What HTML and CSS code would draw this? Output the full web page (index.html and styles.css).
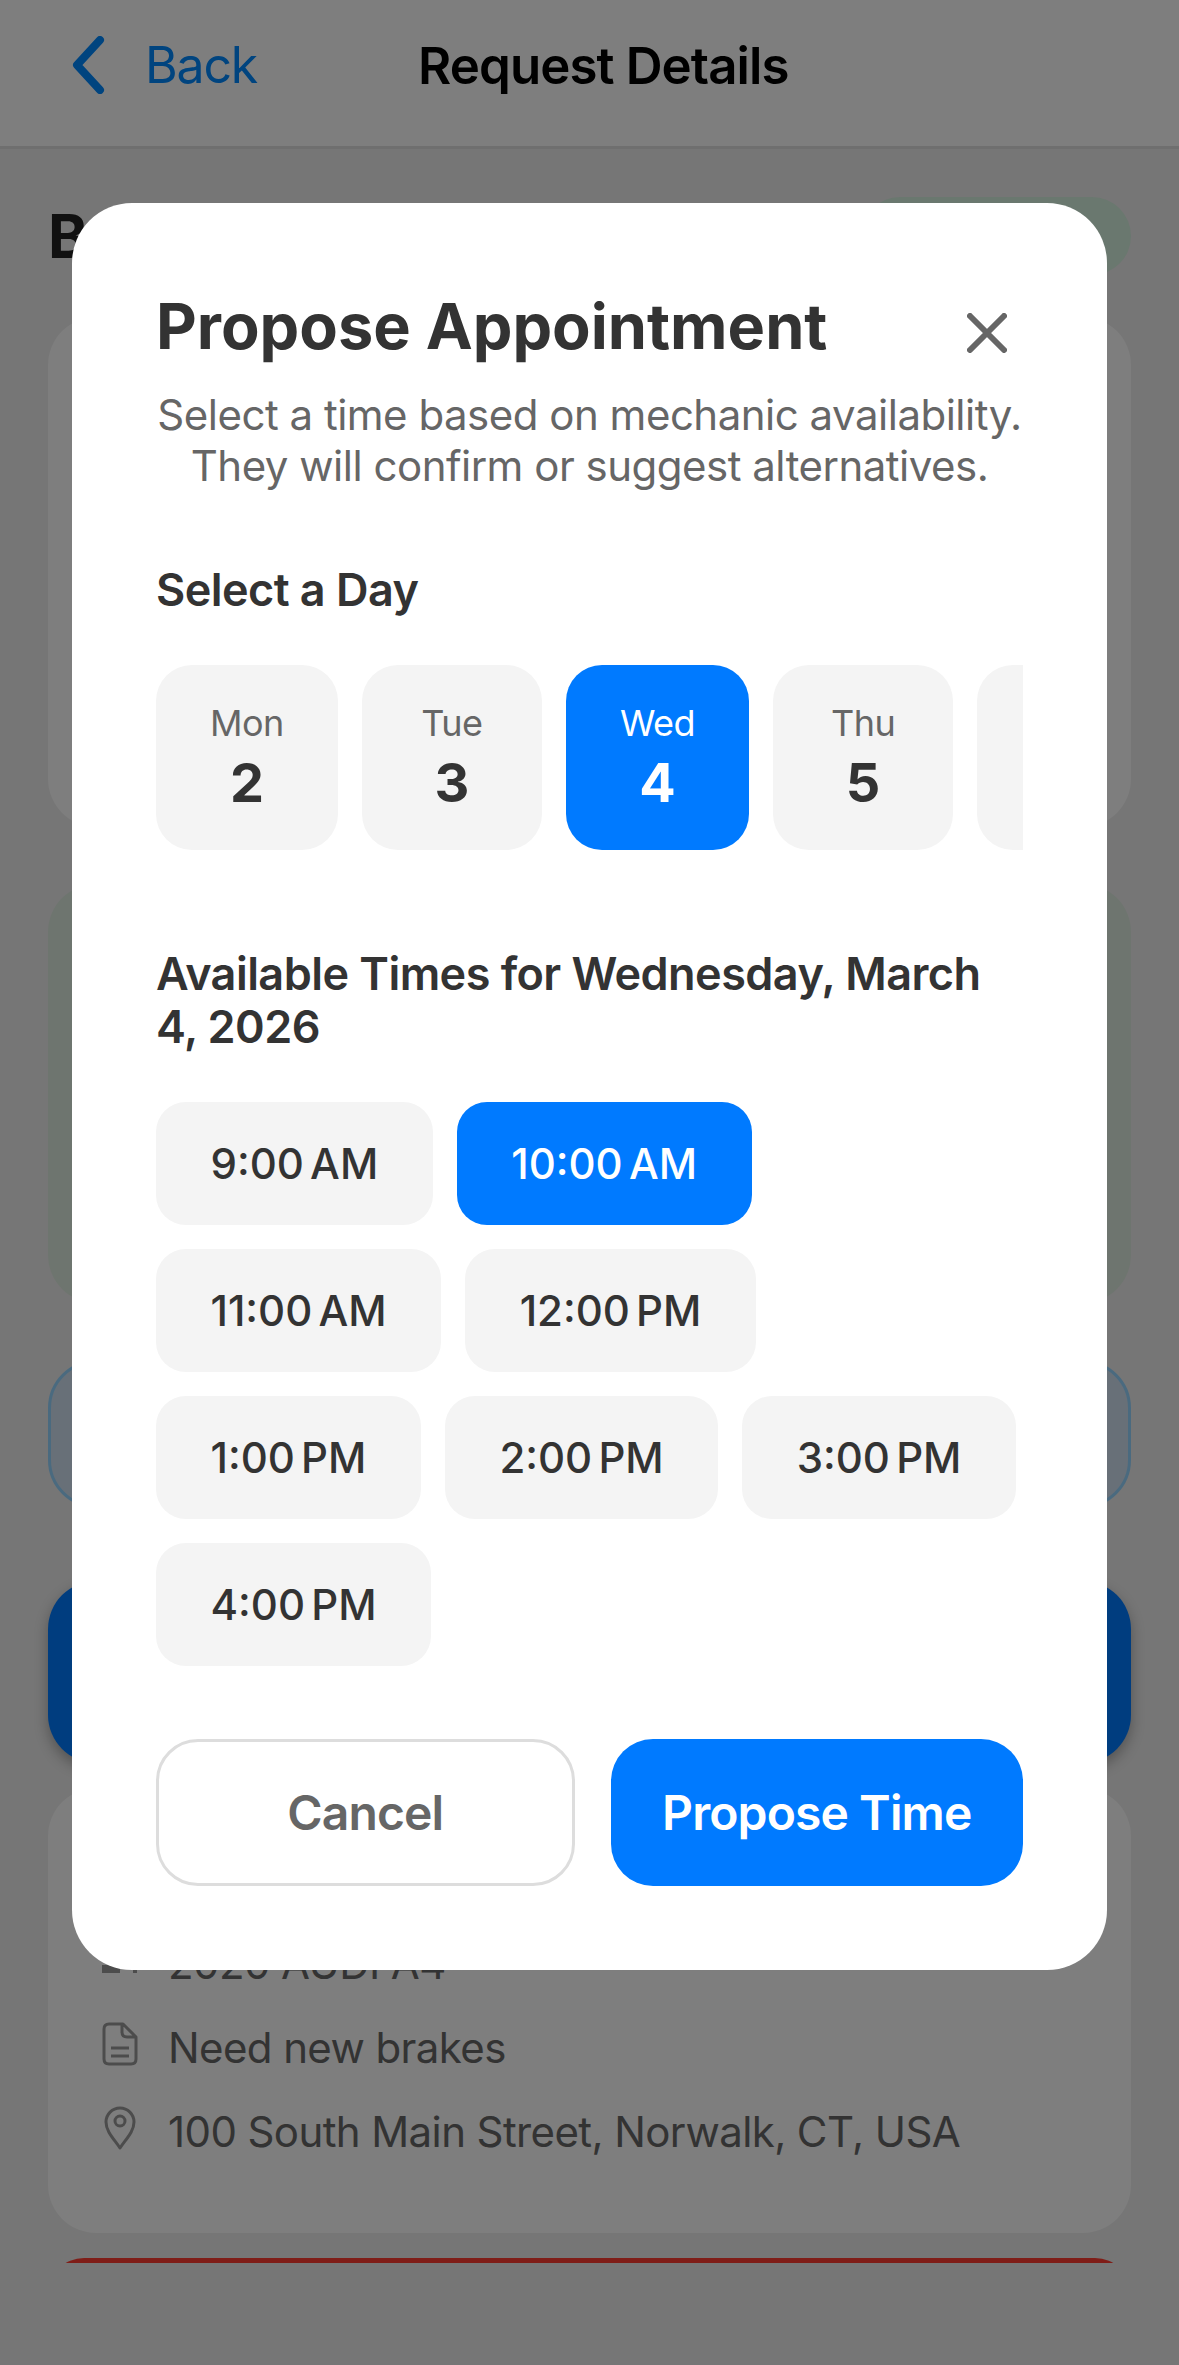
FILE: index.html
```html
<!DOCTYPE html>
<html lang="en">
<head>
  <meta charset="UTF-8">
  <meta name="viewport" content="width=device-width, initial-scale=1.0">
  <title>Request Details</title>
  <link rel="stylesheet" href="styles.css">
</head>
<body>
  <!-- Page behind the modal -->
  <div class="page">
    <header class="nav">
      <div class="nav-back">
        <svg class="nav-chevron" viewBox="0 0 34 58" width="34" height="58">
          <path d="M28 4 L5 29 L28 54" fill="none" stroke="currentColor" stroke-width="8" stroke-linecap="round" stroke-linejoin="round"/>
        </svg>
        <span>Back</span>
      </div>
      <div class="nav-title">Request Details</div>
    </header>

    <main class="scroll">
      <div class="title-row">
        <h2 class="page-title">Brake Service</h2>
        <span class="badge"></span>
      </div>
      <section class="card card-info"></section>
      <section class="card card-green"></section>
      <div class="outline-btn"></div>
      <div class="primary-btn"></div>
      <section class="card card-details">
        <div class="detail-row">
          <svg class="detail-icon" viewBox="0 0 36 44" width="36" height="44">
            <path d="M0 27 H18 V35 H0 Z M31 29 H35 V35 H31 Z" fill="currentColor"/>
          </svg>
          <span>2020 AUDI A4</span>
        </div>
        <div class="detail-row">
          <svg class="detail-icon" viewBox="0 0 36 44" width="36" height="44">
            <path d="M7 2 H21 L34 15 V37 Q34 42 29 42 H7 Q2 42 2 37 V7 Q2 2 7 2 Z M20 2 V10 Q20 15 25 15 H34 M9 26 H27 M9 34 H27" fill="none" stroke="currentColor" stroke-width="3" stroke-linejoin="round"/>
          </svg>
          <span>Need new brakes</span>
        </div>
        <div class="detail-row">
          <svg class="detail-icon" viewBox="0 0 36 44" width="36" height="44">
            <path d="M18 42 C13 34 4 26 4 16 A14 14 0 0 1 32 16 C32 26 23 34 18 42 Z" fill="none" stroke="currentColor" stroke-width="3" stroke-linejoin="round"/>
            <circle cx="18" cy="15" r="5" fill="none" stroke="currentColor" stroke-width="3"/>
          </svg>
          <span>100 South Main Street, Norwalk, CT, USA</span>
        </div>
      </section>
      <div class="danger-btn"></div>
    </main>
  </div>

  <!-- Propose modal -->
  <div class="overlay">
    <div class="modal">
      <div class="modal-head">
        <h1 class="modal-title">Propose Appointment</h1>
        <svg class="modal-close" viewBox="0 0 40 40" width="40" height="40">
          <path d="M3 3 L37 37 M37 3 L3 37" fill="none" stroke="currentColor" stroke-width="6" stroke-linecap="round"/>
        </svg>
      </div>
      <p class="modal-sub">Select a time based on mechanic availability.<br>They will confirm or suggest alternatives.</p>

      <h3 class="section-label">Select a Day</h3>
      <div class="days">
        <div class="day"><span class="day-name">Mon</span><span class="day-num">2</span></div>
        <div class="day"><span class="day-name">Tue</span><span class="day-num">3</span></div>
        <div class="day active"><span class="day-name">Wed</span><span class="day-num">4</span></div>
        <div class="day"><span class="day-name">Thu</span><span class="day-num">5</span></div>
        <div class="day"></div>
      </div>

      <h3 class="section-label times-label">Available Times for Wednesday, March 4, 2026</h3>
      <div class="times">
        <div class="time">9:00 AM</div>
        <div class="time active">10:00 AM</div>
        <div class="time">11:00 AM</div>
        <div class="time">12:00 PM</div>
        <div class="time">1:00 PM</div>
        <div class="time">2:00 PM</div>
        <div class="time">3:00 PM</div>
        <div class="time">4:00 PM</div>
      </div>

      <div class="actions">
        <div class="btn btn-cancel">Cancel</div>
        <div class="btn btn-propose">Propose Time</div>
      </div>
    </div>
  </div>
</body>
</html>
```

FILE: styles.css
```css
/* General */
html, body {
  margin: 0;
  padding: 0;
}

body {
  position: relative;
  width: 1179px;
  height: 2365px;
  overflow: hidden;
  font-family: Inter, "Noto Sans", sans-serif;
  background: #ececec;
}

h1, h2, h3, p {
  margin: 0;
}

/* Page behind the modal */
.page {
  height: 2263px;
  overflow: hidden;
}

.nav {
  display: flex;
  align-items: center;
  height: 149px;
  padding: 0 0 16px 72px;
  box-sizing: border-box;
  background: #fdfdfd;
  border-bottom: 3px solid #dedede;
}

.nav-back {
  display: flex;
  align-items: center;
  width: 346px;
  color: #0088ff;
  font-size: 50px;
  letter-spacing: -1.2px;
}

.nav-chevron {
  margin-right: 39px;
}

.nav-title {
  font-size: 51px;
  font-weight: 600;
  letter-spacing: -0.9px;
  color: #000;
}

.scroll {
  display: flex;
  flex-direction: column;
  padding: 48px 48px 0;
}

.title-row {
  display: flex;
  align-items: center;
  justify-content: space-between;
  height: 78px;
}

.page-title {
  font-size: 60px;
  font-weight: 700;
  color: #222;
  white-space: nowrap;
}

.badge {
  width: 270px;
  height: 78px;
  border-radius: 39px;
  background: #d4f0de;
}

.card {
  border-radius: 48px;
  background: #fcfcfc;
}

.card-info {
  height: 510px;
  margin-top: 42px;
}

.card-green {
  height: 419px;
  margin-top: 57px;
  background: #dceade;
}

.outline-btn {
  height: 142px;
  margin-top: 57px;
  border: 3px solid #94d4ff;
  border-radius: 48px;
  background: #d0e0f0;
}

.primary-btn {
  height: 182px;
  margin-top: 73px;
  border-radius: 48px;
  background: #007aff;
  box-shadow: 0 6px 14px rgba(0, 0, 0, 0.3);
}

.card-details {
  display: flex;
  flex-direction: column;
  justify-content: flex-end;
  gap: 34px;
  height: 445px;
  margin-top: 25px;
  padding: 0 36px 77px;
  box-sizing: border-box;
}

.detail-row {
  display: flex;
  align-items: center;
  gap: 30px;
  height: 50px;
  padding-left: 18px;
  font-size: 42px;
  letter-spacing: -0.6px;
  color: #666;
}

.detail-icon {
  flex: none;
  margin-bottom: 6px;
  color: #999;
}

.danger-btn {
  flex: none;
  height: 160px;
  margin: 25px 0 0;
  border-radius: 36px;
  background: #ff3b30;
}

/* Modal */
.overlay {
  position: absolute;
  top: 0;
  left: 0;
  width: 100%;
  height: 100%;
  padding: 203px 72px 0;
  box-sizing: border-box;
  background: rgba(0, 0, 0, 0.5);
}

.modal {
  height: 1767px;
  padding: 84px;
  box-sizing: border-box;
  background: #fff;
  border-radius: 60px;
}

.modal-head {
  display: flex;
  align-items: center;
  justify-content: space-between;
  height: 79px;
}

.modal-title {
  font-size: 63px;
  line-height: 79px;
  font-weight: 700;
  color: #333;
}

.modal-close {
  margin: 12px 16px 0 0;
  color: #666;
}

.modal-sub {
  margin-top: 23px;
  font-size: 42px;
  line-height: 51px;
  letter-spacing: -0.5px;
  text-align: center;
  white-space: nowrap;
  color: #666;
}

.section-label {
  margin-top: 72px;
  font-size: 45px;
  line-height: 53px;
  font-weight: 600;
  letter-spacing: -0.55px;
  color: #333;
}

.days {
  display: flex;
  gap: 24px;
  margin-top: 49px;
  overflow: hidden;
}

.day {
  display: flex;
  flex: none;
  flex-direction: column;
  align-items: center;
  justify-content: center;
  gap: 7px;
  min-width: 72px;
  height: 185px;
  padding: 0 54px;
  border-radius: 36px;
  background: #f4f4f4;
}

.day-name {
  font-size: 36px;
  line-height: 44px;
  letter-spacing: -0.5px;
  color: #666;
}

.day-num {
  font-size: 54px;
  line-height: 62px;
  font-weight: 700;
  color: #333;
}

.day.active {
  background: #007aff;
}

.day.active .day-name,
.day.active .day-num {
  color: #fff;
}

.times-label {
  margin-top: 97px;
}

.times {
  display: flex;
  flex-wrap: wrap;
  gap: 24px;
  margin-top: 49px;
}

.time {
  display: flex;
  align-items: center;
  height: 123px;
  padding: 0 54.5px;
  border-radius: 30px;
  background: #f4f4f4;
  font-size: 42px;
  font-weight: 500;
  word-spacing: -5px;
  color: #333;
}

.time.active {
  background: #007aff;
  color: #fff;
}

.actions {
  display: flex;
  gap: 36px;
  margin-top: 73px;
}

.btn {
  display: flex;
  flex: 1 1 0;
  align-items: center;
  justify-content: center;
  height: 147px;
  border-radius: 42px;
  font-size: 48px;
  font-weight: 600;
  letter-spacing: -0.9px;
}

.btn-cancel {
  height: 141px;
  border: 3px solid #ddd;
  color: #666;
}

.btn-propose {
  background: #007aff;
  color: #fff;
}
```
